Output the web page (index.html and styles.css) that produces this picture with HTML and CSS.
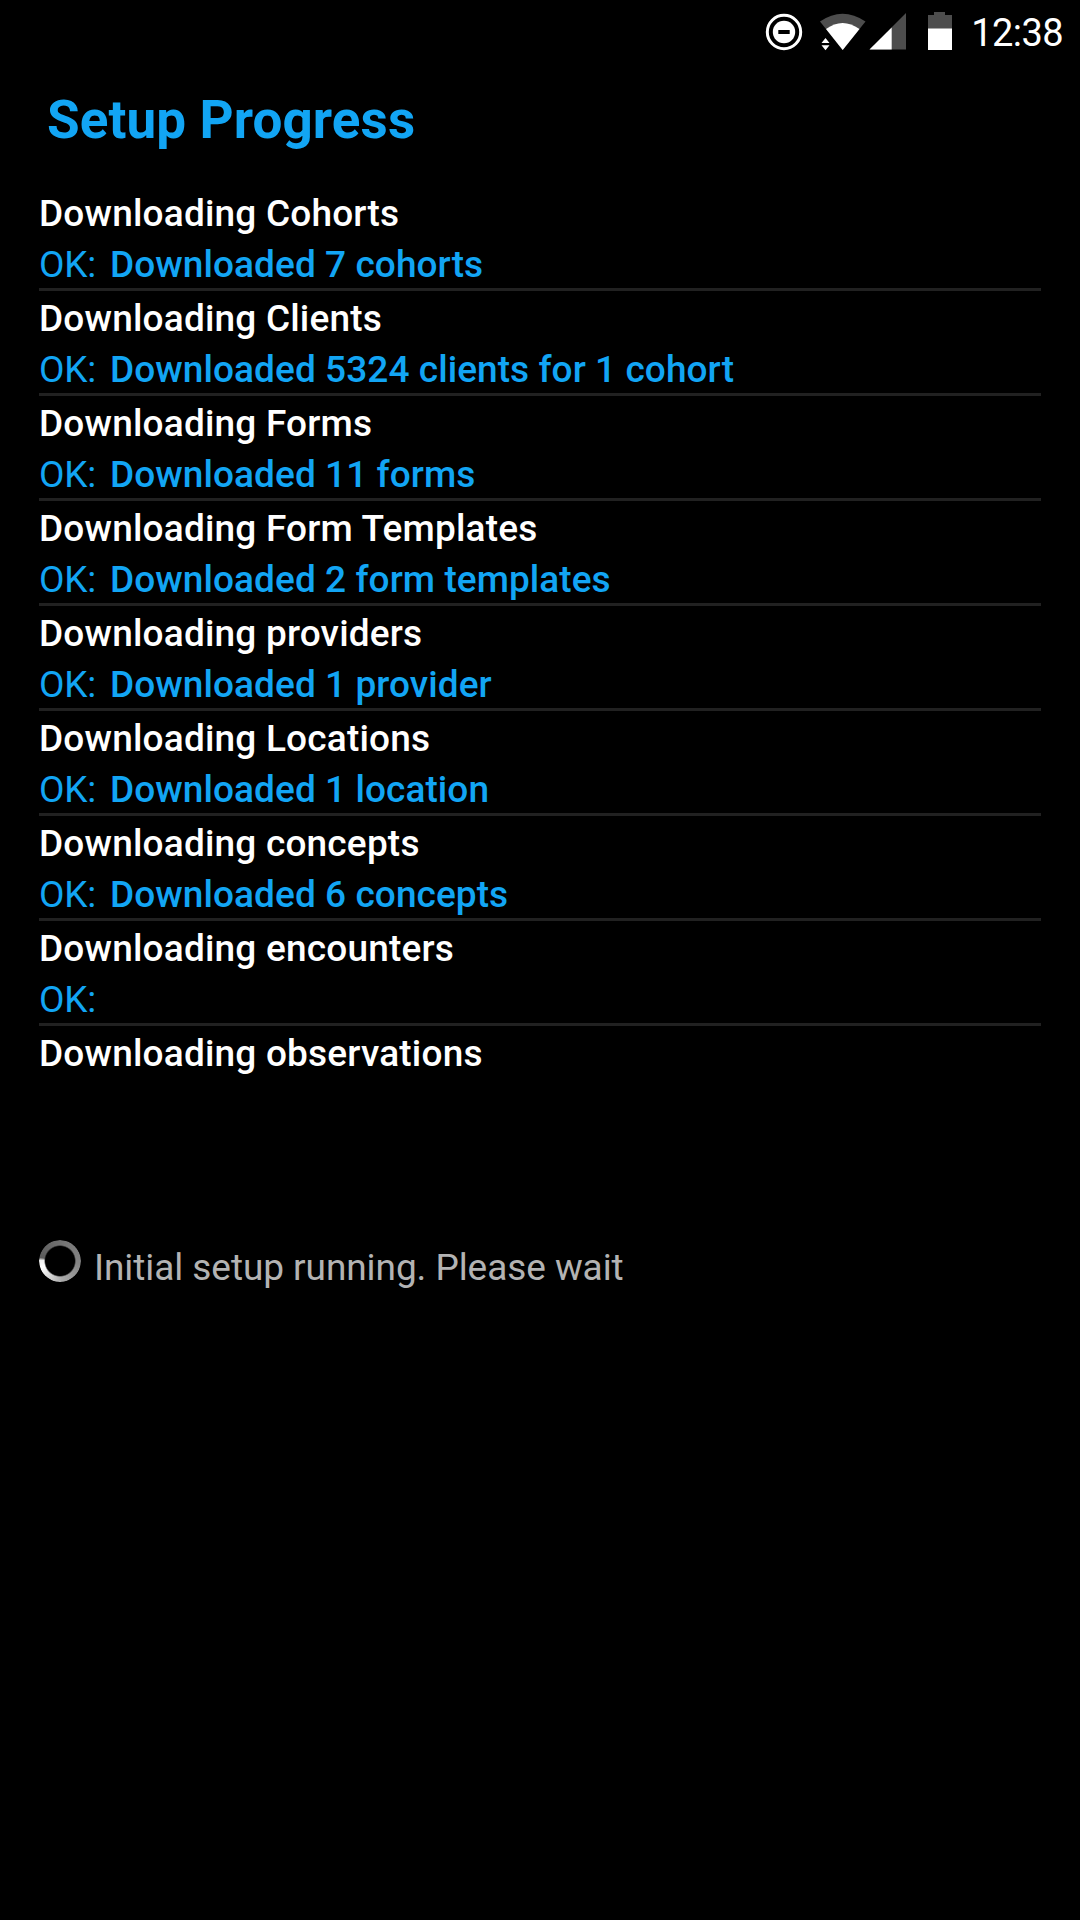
FILE: index.html
```
<!DOCTYPE html>
<html lang="en">
<head>
  <meta charset="UTF-8">
  <meta name="viewport" content="width=device-width, initial-scale=1">
  <title>Setup Progress</title>
  <link rel="stylesheet" href="styles.css">
</head>
<body>
  <header class="status-bar">
    <svg class="status-icons" width="192" height="64" viewBox="760 0 192 64">
      <circle cx="784" cy="32" r="16.7" fill="none" stroke="#fff" stroke-width="3"/>
      <circle cx="784" cy="32" r="11.2" fill="#fff"/>
      <path d="M778.3 32h11.4" stroke="#000" stroke-width="4"/>
      <path d="M820 21.5Q842.5 6 865.5 21.5L842.7 50Z" fill="#4d4d4d"/>
      <path d="M826 29Q842.5 17 859.5 29L842.7 50Z" fill="#fff"/>
      <path d="M821.5 43l4-5 4 5zM821.5 45.300l4 5 4-5z" fill="#fff"/>
      <path d="M906 13V49.500H869.500Z" fill="#4d4d4d"/>
      <path d="M891.700 27.500V49.500H869.500Z" fill="#fff"/>
      <path d="M934 12h11v3h7v14h-24V15h6z" fill="#4d4d4d"/>
      <path d="M928 28.500h24V50h-24z" fill="#fff"/>
    </svg>
    <span class="clock">12:38</span>
  </header>

  <main class="content">
    <h1>Setup Progress</h1>

    <ul class="steps">
      <li class="step">
        <p class="step-name">Downloading Cohorts</p>
        <p class="step-result"><span class="ok">OK:</span><span>Downloaded 7 cohorts</span></p>
      </li>
      <li class="step">
        <p class="step-name">Downloading Clients</p>
        <p class="step-result"><span class="ok">OK:</span><span>Downloaded 5324 clients for 1 cohort</span></p>
      </li>
      <li class="step">
        <p class="step-name">Downloading Forms</p>
        <p class="step-result"><span class="ok">OK:</span><span>Downloaded 11 forms</span></p>
      </li>
      <li class="step">
        <p class="step-name">Downloading Form Templates</p>
        <p class="step-result"><span class="ok">OK:</span><span>Downloaded 2 form templates</span></p>
      </li>
      <li class="step">
        <p class="step-name">Downloading providers</p>
        <p class="step-result"><span class="ok">OK:</span><span>Downloaded 1 provider</span></p>
      </li>
      <li class="step">
        <p class="step-name">Downloading Locations</p>
        <p class="step-result"><span class="ok">OK:</span><span>Downloaded 1 location</span></p>
      </li>
      <li class="step">
        <p class="step-name">Downloading concepts</p>
        <p class="step-result"><span class="ok">OK:</span><span>Downloaded 6 concepts</span></p>
      </li>
      <li class="step">
        <p class="step-name">Downloading encounters</p>
        <p class="step-result"><span class="ok">OK:</span></p>
      </li>
      <li class="step">
        <p class="step-name">Downloading observations</p>
      </li>
    </ul>

    <div class="running">
      <div class="spinner"></div>
      <span class="running-text">Initial setup running. Please wait</span>
    </div>
  </main>
</body>
</html>
```
FILE: styles.css
```
* {
  margin: 0;
  padding: 0;
  box-sizing: border-box;
}

body {
  min-height: 100vh;
  background: #000;
  color: #fff;
  font-family: Roboto, sans-serif;
}

.status-bar {
  display: flex;
  justify-content: flex-end;
  height: 72px;
  padding-right: 17px;
}

.status-icons {
  flex: none;
  margin-right: 18px;
}

.clock {
  width: 93px;
  font-size: 38px;
  letter-spacing: -0.6px;
  line-height: 67px;
  text-align: right;
}

.content {
  padding: 0 39px;
}

h1 {
  height: 114px;
  padding-left: 8px;
  color: #12a5f4;
  font-size: 53px;
  font-weight: 700;
  letter-spacing: 0.1px;
  line-height: 96px;
}

.steps {
  height: 1049px;
  list-style: none;
}

.step {
  height: 105px;
  padding-top: 1px;
  font-size: 37px;
  font-weight: 500;
  border-bottom: 3px solid #212121;
}

.step:last-child {
  border-bottom: none;
}

.step-name,
.step-result {
  height: 51px;
  line-height: 54px;
  white-space: nowrap;
}

.step-name {
  letter-spacing: 0.19px;
}

.step-result {
  display: flex;
  gap: 14px;
  color: #12a5f4;
  letter-spacing: 0.07px;
}

.ok {
  font-weight: 400;
  letter-spacing: -0.2px;
}

.running {
  display: flex;
  align-items: flex-start;
  gap: 13px;
  padding-top: 5px;
}

.spinner {
  width: 42px;
  height: 42px;
  border-radius: 50%;
  background: conic-gradient(from 280deg, #5c5c5c, #777 100deg, #858585 180deg, #aaa 255deg, #fff 330deg, #eee 352deg, #5c5c5c);
  -webkit-mask: radial-gradient(circle, transparent 14.5px, #000 16px);
  mask: radial-gradient(circle, transparent 14.5px, #000 16px);
}

.running-text {
  color: #b3b3b3;
  font-size: 37px;
  letter-spacing: -0.07px;
  line-height: 56px;
}
```
